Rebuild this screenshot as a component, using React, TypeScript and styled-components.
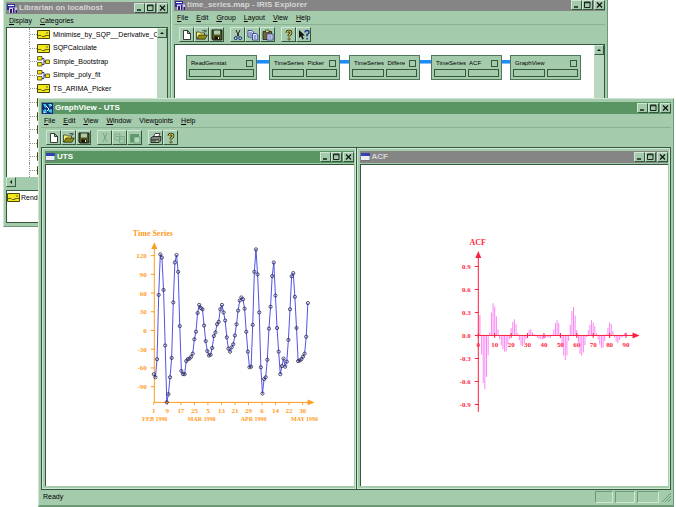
import React from "react";
import styled, { createGlobalStyle, css } from "styled-components";

const C = {
  face: "#a5cbad",
  light: "#cfe8d3",
  shade: "#6b9a76",
  dark: "#35573e",
  active: "#5a9663",
  inactive: "#858585",
  orange: "#ff9c1e",
  red: "#ff1f3d",
};

const Global = createGlobalStyle`
  *, *::before, *::after { box-sizing: border-box; }
  body { margin: 0; background: #fff; }
  button { font: inherit; color: inherit; border: 0; padding: 0; background: none; }
  svg { display: block; }
`;

const raised = css`
  border: 1px solid;
  border-color: ${C.light} ${C.dark} ${C.dark} ${C.light};
`;

const Desktop = styled.main`
  position: relative;
  height: 100vh;
  overflow: hidden;
  background: #fff;
  color: #000;
  font: 7px/10px "Liberation Sans", Arial, sans-serif;
`;

const Frame = styled.section`
  position: absolute;
  display: flex;
  flex-direction: column;
  background: ${C.face};
  border: 1px solid;
  border-color: ${C.light} ${C.shade} ${C.shade} ${C.light};
  padding: 3px;
`;

const LibrarianFrame = styled(Frame)`
  left: 3px;
  top: -2px;
  width: 168px;
  height: 229px;
  padding: 3px 2px;
`;

const MapFrame = styled(Frame)`
  left: 171px;
  right: 68px;
  top: -4px;
  height: 110px;
  padding: 2px;
`;

const GraphFrame = styled(Frame)`
  left: 38px;
  right: 2px;
  top: 98px;
  bottom: 0;
  padding: 3px 2px 1px 2px;
  border-bottom: 2px solid ${C.shade};
`;

const TitleBar = styled.header<{ $active?: boolean }>`
  display: flex;
  align-items: center;
  gap: 2px;
  flex: none;
  height: 12px;
  padding-left: 1px;
  background: ${(p) => (p.$active ? C.active : C.inactive)};
  color: ${(p) => (p.$active ? "#fff" : "#d6d6d6")};
`;

const Title = styled.h1`
  flex: 1;
  margin: 0;
  font-size: 8px;
  line-height: 12px;
  font-weight: 700;
  white-space: nowrap;
`;

const CaptionButtons = styled.div`
  display: flex;
`;

const CaptionButton = styled.button<{ $gap?: boolean }>`
  ${raised}
  width: 11px;
  height: 10px;
  margin-left: ${(p) => (p.$gap ? "1px" : "0")};
  background: ${C.face};
`;

const MenuBar = styled.nav`
  display: flex;
  flex: none;
  align-items: center;
  gap: 8px;
  height: 13px;
  padding-left: 3px;
`;

const MenuItem = styled.button`
  line-height: 12px;
  white-space: nowrap;
`;

const Toolbar = styled.div`
  display: flex;
  flex: none;
  align-items: center;
  gap: 6px;
  height: 20px;
  padding-left: 5px;
  border-top: 1px solid ${C.shade}80;
`;

const ToolGroup = styled.div`
  display: flex;
`;

const ToolButton = styled.button`
  ${raised}
  display: grid;
  place-items: center;
  width: 15px;
  height: 15px;
  background: ${C.face};
`;

const LibraryBody = styled.div`
  display: flex;
  flex: none;
  height: 150px;
  border: 1px solid ${C.dark};
  border-bottom: 0;
  background: #fff;
`;

const Tree = styled.ul`
  display: grid;
  flex: 1;
  grid-auto-rows: 1fr;
  min-width: 0;
  margin: 0 0 0 22px;
  padding: 0;
  overflow: hidden;
  list-style: none;
`;

const TreeItem = styled.li`
  display: flex;
  align-items: center;
  gap: 3px;
  white-space: nowrap;
  border-left: 1px dotted #8a9a8e;

  &::before {
    content: "";
    width: 7px;
    margin-right: -3px;
    border-top: 1px dotted #8a9a8e;
  }
`;

const ScrollTrack = styled.div<{ $across?: boolean }>`
  display: flex;
  flex: none;
  flex-direction: ${(p) => (p.$across ? "row" : "column")};
  width: ${(p) => (p.$across ? "auto" : "10px")};
  height: ${(p) => (p.$across ? "10px" : "auto")};
  background: ${(p) => (p.$across ? C.face : "#b9d8bf")};
`;

const ScrollButton = styled.button`
  ${raised}
  display: grid;
  place-items: center;
  width: 10px;
  height: 10px;
  background: ${C.face};
`;

const Shelf = styled.div`
  display: flex;
  flex: 1;
  gap: 1px;
  align-items: flex-start;
  margin-top: 3px;
  padding-top: 2px;
  border: 1px solid ${C.dark};
  background: #fff;
`;

const MapBody = styled.div`
  display: flex;
  flex: 1;
  border: 1px solid ${C.dark};
  background: #fff;
`;

const Pipeline = styled.div`
  display: flex;
  flex: 1;
  align-items: flex-start;
  padding: 10px 0 0 11px;
`;

const Module = styled.article`
  display: grid;
  grid-template-columns: 1fr 1fr;
  gap: 1px 2px;
  flex: none;
  width: 71px;
  height: 25px;
  padding: 2px;
  border: 1px solid #50785a;
  background: ${C.face};
`;

const ModuleHead = styled.div`
  display: flex;
  grid-column: 1 / 3;
  align-items: center;
  justify-content: space-between;
  height: 10px;
  padding: 0 1px 0 2px;
  font-size: 6px;
  white-space: pre;
`;

const ModuleToggle = styled.button`
  width: 7px;
  height: 7px;
  border: 1px solid ${C.dark};
`;

const Port = styled.button`
  height: 8px;
  border: 1px solid ${C.dark};
`;

const Cord = styled.div<{ $length: number }>`
  flex: none;
  width: ${(p) => p.$length}px;
  height: 4px;
  margin-top: 5px;
  background: #1f8cf5;
  border-bottom: 1px solid #7cc0ff;
`;

const Workspace = styled.div`
  display: flex;
  flex: 1;
  min-height: 0;
  gap: 1px;
  border: 1px solid ${C.dark};
  background: ${C.dark};
`;

const ChildWindow = styled.section`
  display: flex;
  flex: 1;
  flex-direction: column;
  min-width: 0;
  padding: 2px 1px 2px 2px;
  border: 1px solid ${C.light};
  background: ${C.face};
`;

const Plot = styled.div`
  flex: 1;
  min-height: 0;
  margin-top: 1px;
  border-top: 1px solid ${C.dark};
  border-left: 1px solid ${C.dark};
  background: #fff;

  svg {
    width: 100%;
    height: 100%;
  }
`;

const StatusBar = styled.footer`
  display: flex;
  flex: none;
  align-items: center;
  gap: 2px;
  height: 14px;
  padding-left: 2px;
`;

const StatusText = styled.span`
  flex: 1;
`;

const StatusCell = styled.span<{ $width: number }>`
  width: ${(p) => p.$width}px;
  height: 12px;
  border: 1px solid;
  border-color: ${C.shade} ${C.light} ${C.light} ${C.shade};
`;

const PlotText = styled.text<{ $size?: number }>`
  font: 700 ${(p) => p.$size ?? 7}px "Liberation Serif", "Times New Roman", serif;
`;

/* ---------- icons ---------- */

const toolIcons: Record<string, React.ReactNode> = {
  New: (
    <path d="M2.5 1.5h4l3 3v6h-7zM6.5 1.5v3h3" fill="#fff" stroke="#111" strokeWidth=".8" />
  ),
  Open: (
    <>
      <path d="M.5 10V3h3l1 1h4v2" fill="#f4ee6a" stroke="#222" strokeWidth=".7" />
      <path d="M.7 10.2 3 6h8.300L9 10.200z" fill="#8c8a10" stroke="#222" strokeWidth=".7" />
      <path d="M6 2q2-1.500 3.500 0M10 .8v2H8" fill="none" stroke="#222" strokeWidth=".7" />
    </>
  ),
  Save: (
    <>
      <path d="M1 1h10v10H2l-1-1z" fill="#55561a" stroke="#111" strokeWidth=".9" />
      <path d="M3 1.500h6v4H3z" fill="#a9cdb0" />
      <path d="M3.500 7.500h5v3h-5z" fill="#111" />
      <path d="M7 8h1v2H7z" fill="#ddd" />
    </>
  ),
  Cut: (
    <g fill="none" stroke="#1b2f8a" strokeWidth="1">
      <path d="M4 1l3 6.500M8 1 5 7.500" stroke="#222" />
      <circle cx="3.800" cy="9.200" r="1.500" />
      <circle cx="8.200" cy="9.200" r="1.500" />
    </g>
  ),
  Copy: (
    <g fill="#dfe6fa" stroke="#23308a" strokeWidth=".8">
      <path d="M1 1.500h4l1.500 1.500v5H1z" />
      <path d="M5.500 4.500h3.500l1.800 1.500v5H5.500z" />
      <path d="M2 4h3M2 6h3M6.800 7h2.500M6.800 9h2.500" />
    </g>
  ),
  Paste: (
    <>
      <path d="M1 2.500h8.500v8H1z" fill="#6c6b31" stroke="#222" strokeWidth=".8" />
      <path d="M3.500 1h3.500v2.500H3.500z" fill="#d9d36a" stroke="#222" strokeWidth=".6" />
      <path d="M5 5h6v6H5z" fill="#e8ecfa" stroke="#23308a" strokeWidth=".8" />
      <path d="M6.200 7h3.500M6.200 9h3.500" stroke="#23308a" strokeWidth=".7" />
    </>
  ),
  Print: (
    <>
      <path d="M3.500 5 5 1.500h5L8.500 5" fill="#fff" stroke="#222" strokeWidth=".8" />
      <path d="M1 6l2-1.500h8L10.500 9 9 10.500H1z" fill="#7d8a80" stroke="#222" strokeWidth=".9" />
      <path d="M1.500 8h7.500" stroke="#222" />
      <path d="M6 9h2" stroke="#e8e25a" />
    </>
  ),
  Help: (
    <>
      <path d="M4 4q0-2 2-2t2 2Q8 5 6 6v1.500" fill="none" stroke="#222" strokeWidth="2.600" />
      <path d="M4 4q0-2 2-2t2 2Q8 5 6 6v1.200" fill="none" stroke="#e6dc2c" strokeWidth="1.100" />
      <circle cx="6" cy="10" r="1.100" fill="#e6dc2c" stroke="#222" strokeWidth=".7" />
    </>
  ),
  "Context help": (
    <>
      <path d="M1 1v8l2-1.800L4.300 10.500l1.500-.6L4.500 6.500H7z" fill="#111" />
      <path d="M7 3.500q0-2 2-2t2 2Q11 4.500 9 5.500v2M9 9v1.500" fill="none" stroke="#1d2d86" strokeWidth="1.400" />
    </>
  ),
};

const disabledIcons: Record<string, React.ReactNode> = {
  Cut: <path d="M4 1l4 9M8 1 4 10" fill="none" stroke="#76a681" strokeWidth="1" />,
  Copy: (
    <path d="M1 2h5v6H1zM5.500 4.500h5V11h-5zM6.500 7h3M2 4.500h3" fill="none" stroke="#76a681" strokeWidth=".8" />
  ),
  Paste: (
    <>
      <path d="M1 2h9v8.500H1z" fill="#5f9a6b" />
      <path d="M5 5h6v6H5z" fill="#b5d7bb" stroke="#5f9a6b" strokeWidth=".8" />
    </>
  ),
};

function Tool({ name, disabled }: { name: string; disabled?: boolean }) {
  return (
    <ToolButton aria-label={name} disabled={disabled}>
      <svg width="12" height="12" viewBox="0 0 12 12" aria-hidden="true">
        {disabled ? disabledIcons[name] : toolIcons[name]}
      </svg>
    </ToolButton>
  );
}

function ExplorerIcon() {
  return (
    <svg width="10" height="10" viewBox="0 0 10 10" aria-hidden="true">
      <path d="M0 1h8v6H0z" fill="#2a2ca0" />
      <path d="M1 2h6v1H1z" fill="#fff" />
      <path d="M2 4.500h8V10H2z" fill="#d7c9ee" />
      <path d="M3 6h2v4H3zM6 5h1.500v5H6zM8.500 7H10v3H8.500z" fill="#28206e" />
    </svg>
  );
}

function GraphIcon() {
  return (
    <svg width="11" height="11" viewBox="0 0 11 11" aria-hidden="true">
      <path d="M0 0h11v11H0z" fill="#16277c" />
      <path d="M1 1h3l1 3-2 1zM6 1h4L8 5zM1 7l3-1 1 4H2zM6 7l4-1v4L7 9z" fill="#3cc4e4" />
      <path d="M4 3l3 3-2 2" fill="none" stroke="#f4f8ff" strokeWidth="1" />
      <path d="M8 1l2 2M1 9l2 1" stroke="#fff" strokeWidth=".8" />
    </svg>
  );
}

function DocumentIcon() {
  return (
    <svg width="9" height="8" viewBox="0 0 9 8" aria-hidden="true">
      <path d="M0 0h9v8H0z" fill="#e9eef2" />
      <path d="M0 0h9v3H0z" fill="#3540b8" />
      <path d="M0 7.500h9V0" fill="none" stroke="#555" strokeWidth=".8" />
    </svg>
  );
}

function ModuleIcon() {
  return (
    <svg width="13" height="9" viewBox="0 0 13 9" aria-hidden="true">
      <path d="M.5.5h12v8H.5z" fill="#f2e71c" stroke="#4a4708" strokeWidth="1" />
      <path d="M1 5.500h3l1 1h3v-1h4M9 3h2" fill="none" stroke="#6f6a0c" strokeWidth="1" />
    </svg>
  );
}

function GroupIcon() {
  return (
    <svg width="13" height="11" viewBox="0 0 13 11" aria-hidden="true">
      <path d="M5 2.500h2v6H5M7 5.500H9" fill="none" stroke="#3b2fae" strokeWidth="1" />
      <g fill="#f2e71c" stroke="#4a4708" strokeWidth=".8">
        <path d="M.5.5H5v3.500H.5zM.5 6.500H5V10H.5zM8.500 4h4v3.500h-4z" />
      </g>
    </svg>
  );
}

/* ---------- shared parts ---------- */

function Captions() {
  return (
    <CaptionButtons>
      <CaptionButton aria-label="Minimize">
        <svg width="9" height="8" viewBox="0 0 9 8" aria-hidden="true">
          <path d="M2 6h4" stroke="#111" strokeWidth="1.400" />
        </svg>
      </CaptionButton>
      <CaptionButton aria-label="Maximize">
        <svg width="9" height="8" viewBox="0 0 9 8" aria-hidden="true">
          <path d="M1.500 1h5.500v5.500H1.500zM1.500 1.800H7" fill="none" stroke="#111" strokeWidth=".9" />
        </svg>
      </CaptionButton>
      <CaptionButton aria-label="Close" $gap>
        <svg width="9" height="8" viewBox="0 0 9 8" aria-hidden="true">
          <path d="M2 1.500l5 5M7 1.500l-5 5" stroke="#111" strokeWidth="1.200" />
        </svg>
      </CaptionButton>
    </CaptionButtons>
  );
}

function Menu({ items }: { items: string[] }) {
  return (
    <MenuBar>
      {items.map((item) => {
        const at = item.indexOf("&");
        return (
          <MenuItem key={item}>
            {item.slice(0, at)}
            <u>{item[at + 1]}</u>
            {item.slice(at + 2)}
          </MenuItem>
        );
      })}
    </MenuBar>
  );
}

function ArrowButton({ label, d }: { label: string; d: string }) {
  return (
    <ScrollButton aria-label={label}>
      <svg width="6" height="6" viewBox="0 0 6 6" aria-hidden="true">
        <path d={d} fill="#111" />
      </svg>
    </ScrollButton>
  );
}

/* ---------- charts ---------- */

const series = [
  -70, -75, -46, 57, 122, 117, 65, -24, -115, -102, -75, -44, 45, 109, 121, 94, 7, -65, -70, -70, -49, -46, -45, -42,
  -37, -14, -2, 28, 41, 36, 34, 8, -17, -33, -40, -39, -28, -9, -3, 10, 14, 34, 41, 29, 16, -11, -29, -34, -27, -22,
  -8, 10, 32, 48, 53, 50, 35, -2, -34, -59, -58, 9, 94, 130, 90, 29, -59, -101, -78, -75, -47, 3, 38, 87, 109, 56, 4,
  -34, -70, -57, -45, -58, -50, -15, 34, 87, 92, 54, 4, -49, -48, -46, -42, -37, -10, 44,
];

function TimeSeriesPlot() {
  const x = (i: number) => 154 + i * 1.624;
  const y = (v: number) => 330.500 - v * 0.625;
  const days = [1, 9, 17, 25, 5, 13, 21, 29, 6, 14, 22, 30];
  const months: [string, number][] = [
    ["FEB 1990", 155],
    ["MAR 1990", 202],
    ["APR 1990", 254],
    ["MAY 1990", 305],
  ];
  return (
    <svg viewBox="46 165 308 321" role="img" aria-label="Time Series">
      <g fill={C.orange}>
        <PlotText $size={8} x="153" y="236" textAnchor="middle">
          Time Series
        </PlotText>
        <path d="M154.500 242l3 7h-6zM315 402.500l-7-3v6z" />
        {[120, 90, 60, 30, 0, -30, -60, -90].map((v) => (
          <PlotText key={v} x="147" y={y(v) + 2.500} textAnchor="end">
            {v}
          </PlotText>
        ))}
        {days.map((d, i) => (
          <PlotText key={i} x={154 + i * 13.550} y="413" textAnchor="middle">
            {d}
          </PlotText>
        ))}
        {months.map(([name, at]) => (
          <PlotText key={name} $size={6} x={at} y="421" textAnchor="middle">
            {name}
          </PlotText>
        ))}
      </g>
      <g stroke={C.orange} strokeWidth="1" fill="none">
        <path d="M154.500 248v154.500H310" />
        {[120, 90, 60, 30, 0, -30, -60, -90].map((v) => (
          <path key={v} d={`M151 ${y(v)}h4`} />
        ))}
        {days.map((_, i) => (
          <path key={i} d={`M${154 + i * 13.550} 402v3`} />
        ))}
      </g>
      <polyline points={series.map((v, i) => `${x(i)},${y(v)}`).join(" ")} fill="none" stroke="#3f3fe0" strokeWidth=".9" />
      <g fill="none" stroke="#26264f" strokeWidth=".8">
        {series.map((v, i) => (
          <circle key={i} cx={x(i)} cy={y(v)} r="1.600" />
        ))}
      </g>
    </svg>
  );
}

const acf = [
  27, -25, -62, -70, -54, -26, 4, 30, 42, 38, 25, 8, -5, -13, -18, -21, -21, -12, -5, 10, 18, 21, 15, 3, -6, -13, -14,
  -10, -5, -2, 7, 8, 4, 2, -1, -3, -4, -5, -5, -5, -3, -2, -3, -3, 1, 8, 16, 20, 16, 3, -13, -26, -32, -26, -7, 14, 32,
  37, 26, 7, -9, -24, -26, -22, -13, -2, 7, 14, 20, 17, 12, 3, -5, -12, -16, -16, -7, 2, 10, 17, 15, 6, -3, -8, -10,
  -6, -3, -2, 3, 4,
];

function AcfPlot() {
  const x = (lag: number) => 477.500 + lag * 1.644;
  const y = (v: number) => 335.500 - v * 0.768;
  const levels = [90, 60, 30, 0, -30, -60, -90];
  const lags = [0, 10, 20, 30, 40, 50, 60, 70, 80, 90];
  return (
    <svg viewBox="360 165 308 321" role="img" aria-label="ACF">
      <g stroke="#fa86f4" strokeWidth="1">
        {acf.map((v, i) => (
          <path key={i} d={`M${x(i + 1)} 335.500V${y(v)}`} />
        ))}
      </g>
      <g stroke={C.red} strokeWidth="1" fill="none">
        <path d="M477.500 256v156M477.500 335.500H633" />
        {levels.map((v) => (
          <path key={v} d={`M474 ${y(v)}h4`} />
        ))}
        {lags.map((v) => (
          <path key={v} d={`M${x(v)} 333v5`} />
        ))}
      </g>
      <g fill={C.red}>
        <PlotText $size={8} x="477" y="245" textAnchor="middle">
          ACF
        </PlotText>
        <path d="M477.500 251l3 7h-6zM639 335.500l-7-3v6z" />
        {levels.map((v) => (
          <PlotText key={v} x="470" y={y(v) + 2.500} textAnchor="end">
            {(v / 100).toFixed(1)}
          </PlotText>
        ))}
        {lags.map((v) => (
          <PlotText key={v} x={x(v)} y="347" textAnchor="middle">
            {v}
          </PlotText>
        ))}
      </g>
    </svg>
  );
}

/* ---------- windows ---------- */

const library: { name: string; group?: boolean }[] = [
  { name: "Minimise_by_SQP__Derivative_C" },
  { name: "SQPCalculate" },
  { name: "Simple_Bootstrap", group: true },
  { name: "Simple_poly_fit", group: true },
  { name: "TS_ARIMA_Picker" },
  { name: "" },
  { name: "" },
  { name: "" },
  { name: "" },
  { name: "" },
  { name: "" },
];

const modules: { name: string; cord?: number }[] = [
  { name: "ReadGenstat", cord: 12 },
  { name: "TimeSeries  Picker", cord: 9 },
  { name: "TimeSeries  Differe", cord: 11 },
  { name: "TimeSeries  ACF", cord: 8 },
  { name: "GraphView" },
];

function Librarian() {
  return (
    <LibrarianFrame>
      <TitleBar>
        <ExplorerIcon />
        <Title>Librarian on localhost</Title>
        <Captions />
      </TitleBar>
      <Menu items={["&Display", "&Categories"]} />
      <LibraryBody>
        <Tree>
          {library.map((item, i) => (
            <TreeItem key={i}>
              {item.group ? <GroupIcon /> : <ModuleIcon />}
              {item.name}
            </TreeItem>
          ))}
        </Tree>
        <ScrollTrack>
          <ArrowButton label="Scroll up" d="M3 2l2 2H1z" />
        </ScrollTrack>
      </LibraryBody>
      <ScrollTrack $across>
        <ArrowButton label="Scroll left" d="M2 3l2-2v4z" />
      </ScrollTrack>
      <Shelf>
        <ModuleIcon />
        Render
      </Shelf>
    </LibrarianFrame>
  );
}

function MapEditor() {
  return (
    <MapFrame>
      <TitleBar>
        <ExplorerIcon />
        <Title>time_series.map - IRIS Explorer</Title>
        <Captions />
      </TitleBar>
      <Menu items={["&File", "&Edit", "&Group", "&Layout", "&View", "&Help"]} />
      <Toolbar>
        <ToolGroup>
          <Tool name="New" />
          <Tool name="Open" />
          <Tool name="Save" />
        </ToolGroup>
        <ToolGroup>
          <Tool name="Cut" />
          <Tool name="Copy" />
          <Tool name="Paste" />
        </ToolGroup>
        <ToolGroup>
          <Tool name="Help" />
          <Tool name="Context help" />
        </ToolGroup>
      </Toolbar>
      <MapBody>
        <Pipeline>
          {modules.map((m) => (
            <React.Fragment key={m.name}>
              <Module>
                <ModuleHead>
                  {m.name}
                  <ModuleToggle aria-label={`Open ${m.name}`} />
                </ModuleHead>
                <Port aria-label="Inputs" />
                <Port aria-label="Outputs" />
              </Module>
              {m.cord && <Cord $length={m.cord} />}
            </React.Fragment>
          ))}
        </Pipeline>
        <ScrollTrack>
          <ArrowButton label="Scroll up" d="M3 2l2 2H1z" />
        </ScrollTrack>
      </MapBody>
    </MapFrame>
  );
}

function GraphView() {
  return (
    <GraphFrame>
      <TitleBar $active>
        <GraphIcon />
        <Title>GraphView - UTS</Title>
        <Captions />
      </TitleBar>
      <Menu items={["&File", "&Edit", "&View", "&Window", "View&points", "&Help"]} />
      <Toolbar>
        <ToolGroup>
          <Tool name="New" />
          <Tool name="Open" />
          <Tool name="Save" />
        </ToolGroup>
        <ToolGroup>
          <Tool name="Cut" disabled />
          <Tool name="Copy" disabled />
          <Tool name="Paste" disabled />
        </ToolGroup>
        <ToolGroup>
          <Tool name="Print" />
          <Tool name="Help" />
        </ToolGroup>
      </Toolbar>
      <Workspace>
        <ChildWindow>
          <TitleBar $active>
            <DocumentIcon />
            <Title>UTS</Title>
            <Captions />
          </TitleBar>
          <Plot>
            <TimeSeriesPlot />
          </Plot>
        </ChildWindow>
        <ChildWindow>
          <TitleBar>
            <DocumentIcon />
            <Title>ACF</Title>
            <Captions />
          </TitleBar>
          <Plot>
            <AcfPlot />
          </Plot>
        </ChildWindow>
      </Workspace>
      <StatusBar>
        <StatusText>Ready</StatusText>
        <StatusCell $width={18} />
        <StatusCell $width={20} />
        <StatusCell $width={22} />
        <svg width="10" height="10" viewBox="0 0 10 10" aria-hidden="true">
          <path d="M1 10l9-9M4 10l6-6M7 10l3-3" stroke={C.shade} strokeWidth="1" />
        </svg>
      </StatusBar>
    </GraphFrame>
  );
}

export default function App() {
  return (
    <>
      <Global />
      <Desktop>
        <Librarian />
        <MapEditor />
        <GraphView />
      </Desktop>
    </>
  );
}
